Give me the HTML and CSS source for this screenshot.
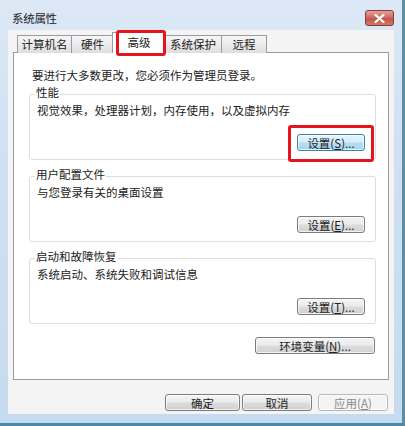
FILE: index.html
```html
<!DOCTYPE html>
<html lang="zh-CN">
<head>
<meta charset="utf-8">
<title>系统属性</title>
<link rel="stylesheet" href="styles.css">
</head>
<body>
<div class="window">
  <div class="titlebar">
    <span class="title">系统属性</span>
    <span class="close"><svg width="11" height="9" viewBox="0 0 11 9"><path d="M1.5 1 L9.5 8 M9.5 1 L1.5 8" stroke="#fff" stroke-width="2.2" stroke-linecap="round"/></svg></span>
  </div>
  <div class="client">
    <div class="tabs">
      <div class="tab t1">计算机名</div>
      <div class="tab t2">硬件</div>
      <div class="tab t3 active">高级</div>
      <div class="tab t4">系统保护</div>
      <div class="tab t5">远程</div>
    </div>
    <div class="panel">
      <p class="intro">要进行大多数更改，您必须作为管理员登录。</p>
      <fieldset class="group">
        <legend>性能</legend>
        <p class="desc">视觉效果，处理器计划，内存使用，以及虚拟内存</p>
        <div class="row"><button class="btn set hot">设置(<u>S</u>)...</button></div>
      </fieldset>
      <fieldset class="group">
        <legend>用户配置文件</legend>
        <p class="desc">与您登录有关的桌面设置</p>
        <div class="row"><button class="btn set">设置(<u>E</u>)...</button></div>
      </fieldset>
      <fieldset class="group">
        <legend>启动和故障恢复</legend>
        <p class="desc">系统启动、系统失败和调试信息</p>
        <div class="row"><button class="btn set">设置(<u>T</u>)...</button></div>
      </fieldset>
      <div class="row env"><button class="btn envbtn">环境变量(<u>N</u>)...</button></div>
    </div>
    <div class="footer">
      <button class="btn ok">确定</button>
      <button class="btn cancel">取消</button>
      <button class="btn apply" disabled>应用(<u>A</u>)</button>
    </div>
  </div>
  <div class="mark m1"></div>
  <div class="mark m2"></div>
</div>
</body>
</html>
```

FILE: styles.css
```css
* { box-sizing: border-box; }
html, body { margin: 0; padding: 0; }
body {
  width: 405px;
  height: 426px;
  overflow: hidden;
  font-family: "Noto Sans CJK SC", "Liberation Sans", sans-serif;
  font-size: 11.5px;
  color: #222;
  background: #fff;
}
.window {
  position: relative;
  width: 405px;
  height: 426px;
  display: flex;
  flex-direction: column;
  padding: 0 8px 9px 8px;
  background: linear-gradient(180deg, #dce8f5 0%, #cfe0f2 40%, #c6daf0 100%);
  border-right: 3px solid #5d8ea6;
  border-bottom: 3px solid #4f86a8;
}
.titlebar {
  height: 30px;
  flex: none;
  display: flex;
  justify-content: space-between;
  align-items: flex-start;
  margin: 0 -3px 0 -8px;
  padding: 0 3px 0 12px;
}
.title {
  margin-top: 11px;
  line-height: 14px;
  color: #1b1b1b;
  letter-spacing: -0.3px;
}
.close {
  margin-top: 10px;
  width: 29px;
  height: 16px;
  border: 1px solid #8b3a36;
  border-radius: 3px;
  background: linear-gradient(180deg, #e3a196 0%, #cf6e62 45%, #c2554a 55%, #cf7a6c 100%);
  display: flex;
  align-items: center;
  justify-content: center;
}
.client {
  flex: 1;
  background: #f4f4f4;
  padding: 2px 5px 0 5px;
  display: flex;
  flex-direction: column;
}
.tabs {
  display: flex;
  align-items: flex-end;
  padding-left: 4px;
  margin-bottom: -1px;
  position: relative;
  z-index: 1;
}
.tab {
  height: 18px;
  line-height: 16px;
  text-align: center;
  border: 1px solid #9a9ca3;
  border-bottom: none;
  margin-left: -1px;
  background: linear-gradient(180deg, #f6f6f6 0%, #ebebeb 50%, #dedede 100%);
  color: #222;
}
.t1 { width: 55px; margin-left: 0; }
.t2 { width: 43px; }
.t3 { width: 54px; }
.t4 { width: 58px; }
.t5 { width: 46px; }
.tab.active {
  height: 21px;
  line-height: 18px;
  background: #fff;
  margin-left: -2px;
  margin-right: -1px;
}
.panel {
  border: 1px solid #9a9ca3;
  background: #fff;
  padding: 15px 12px 25px 15px;
}
.intro {
  margin: 0 0 0 3px;
  line-height: 14px;
}
.group {
  margin: 7px 0 0 0;
  min-width: 0;
  padding: 0 10px 8px 5px;
  border: 1px solid #d9dee3;
  border-radius: 3px;
}
.intro + .group { margin-top: 3px; }
.group legend {
  padding: 0 1px 4px 1px;
  line-height: 14px;
}
.desc {
  margin: 0 0 0 2px;
  line-height: 14px;
}
.row {
  display: flex;
  justify-content: flex-end;
  margin-top: 17px;
}
.btn {
  font: inherit;
  color: #222;
  height: 17px;
  padding: 0;
  line-height: 14px;
  border: 1px solid #7c7c7c;
  border-radius: 3px;
  background: linear-gradient(180deg, #f4f4f4 0%, #ebebeb 48%, #dcdcdc 52%, #d0d0d0 100%);
  box-shadow: inset 0 0 0 1px rgba(255,255,255,0.7);
  text-align: center;
}
.btn u { text-decoration: underline; }
.set { width: 68px; }
.hot {
  border-color: #3c7fb1;
  background: linear-gradient(180deg, #e6f5fd 0%, #d6eefb 48%, #b5def5 52%, #a6d5ef 100%);
}
.env { margin-top: 13px; padding-right: 1px; }
.envbtn { width: 120px; }
.footer {
  display: flex;
  justify-content: flex-end;
  margin-top: 14px;
  padding-right: 1px;
}
.ok { width: 75px; }
.cancel { width: 70px; margin-left: 2px; }
.apply {
  width: 70px;
  margin-left: 6px;
  color: #8a8a8a;
  border-color: #b4b8bb;
  background: #f4f4f4;
}
.mark {
  position: absolute;
  border: 3px solid #e3141c;
  border-radius: 3px;
  z-index: 5;
}
.m1 { left: 116px; top: 30px; width: 50px; height: 26px; }
.m2 { left: 288px; top: 125px; width: 86px; height: 37px; }
```
